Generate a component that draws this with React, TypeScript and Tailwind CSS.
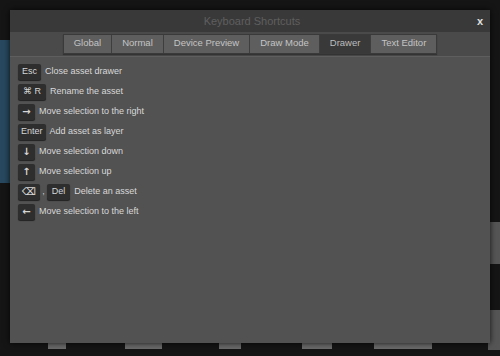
import type { ReactNode } from "react";

const TABS = ["Global", "Normal", "Device Preview", "Draw Mode", "Drawer", "Text Editor"];
const ACTIVE_TAB = "Drawer";

const FONT = { fontFamily: '"Liberation Sans", Arial, sans-serif' };

function Key({ children, pad = "px-[4px]" }: { children: ReactNode; pad?: string }) {
  return (
    <span
      className={`inline-flex h-[16px] min-w-[17px] items-center justify-center rounded-[2px] bg-[#2e2e2e] text-[9px] text-[#d6d6d6] shadow-[0_1px_1px_rgba(0,0,0,0.6)] ${pad}`}
    >
      {children}
    </span>
  );
}

function Arrow({ children }: { children: ReactNode }) {
  return (
    <span className="flex h-[16px] items-center font-['DejaVu_Sans',sans-serif] text-[10px] font-bold leading-none">
      {children}
    </span>
  );
}

type Row = { keys: ReactNode; label: string };

const ROWS: Row[] = [
  { keys: <Key>Esc</Key>, label: "Close asset drawer" },
  { keys: <Key pad="px-[5px]">⌘ R</Key>, label: "Rename the asset" },
  { keys: <Key><Arrow>→</Arrow></Key>, label: "Move selection to the right" },
  { keys: <Key pad="px-[3px]">Enter</Key>, label: "Add asset as layer" },
  { keys: <Key><Arrow>↓</Arrow></Key>, label: "Move selection down" },
  { keys: <Key><Arrow>↑</Arrow></Key>, label: "Move selection up" },
  {
    keys: (
      <>
        <Key pad="px-[4px]"><Arrow>⌫</Arrow></Key>
        <span className="mx-[2px] text-[9px] text-[#d0d0d0]">,</span>
        <Key pad="px-[5px]">Del</Key>
      </>
    ),
    label: "Delete an asset",
  },
  { keys: <Key><Arrow>←</Arrow></Key>, label: "Move selection to the left" },
];

export default function App() {
  return (
    <div className="relative h-[356px] w-[500px] overflow-hidden bg-[#151515] px-[10px] pt-[10px]" style={FONT}>
      {/* pieces of the app behind the dialog */}
      <div className="absolute left-0 top-[40px] h-[143px] w-[12px] bg-[#27485e]" />
      <div className="absolute right-0 top-[222px] h-[42px] w-[12px] bg-[#555]" />
      <div className="absolute right-0 top-[310px] h-[40px] w-[12px] bg-[#555]" />

      <div className="relative flex h-[333px] flex-col bg-[#525252] shadow-[0_0_6px_rgba(0,0,0,0.8)]">
        <div className="flex h-[22px] items-center bg-[#393939] px-[7px]">
          <span className="flex-1 pl-[10px] text-center text-[11px] text-[#5f5f5f]">Keyboard Shortcuts</span>
          <span className="text-[11px] font-bold text-[#e0e0e0]">x</span>
        </div>
        <div className="flex h-[25px] items-center justify-center border-b border-[#5e5e5e] bg-[#4a4a4a] pb-[1px]">
          <div className="flex h-[20px] border border-[#3a3a3a] shadow-[0_1px_1px_rgba(0,0,0,0.3)]">
            {TABS.map((tab) => (
              <div
                key={tab}
                className={`flex items-center border-r border-[#3e3e3e] px-[10px] text-[9.5px] last:border-r-0 ${
                  tab === ACTIVE_TAB ? "bg-[#393939] text-[#bdbdbd]" : "bg-[#5e5e5e] text-[#c4c4c4]"
                }`}
              >
                {tab}
              </div>
            ))}
          </div>
        </div>
        <div className="flex flex-col gap-[4px] px-[8px] pt-[7px]">
          {ROWS.map((row) => (
            <div key={row.label} className="flex items-center">
              {row.keys}
              <span className="ml-[4px] text-[9px] text-[#d8d8d8]">{row.label}</span>
            </div>
          ))}
        </div>
      </div>

      <div className="flex h-[6px]">
        <div className="ml-[38px] w-[18px] bg-[#6a6a6a]" />
        <div className="ml-[59px] w-[37px] bg-[#6a6a6a]" />
        <div className="ml-[57px] w-[22px] bg-[#6a6a6a]" />
        <div className="ml-[61px] w-[30px] bg-[#6a6a6a]" />
        <div className="ml-[42px] w-[58px] bg-[#6a6a6a]" />
      </div>
    </div>
  );
}
